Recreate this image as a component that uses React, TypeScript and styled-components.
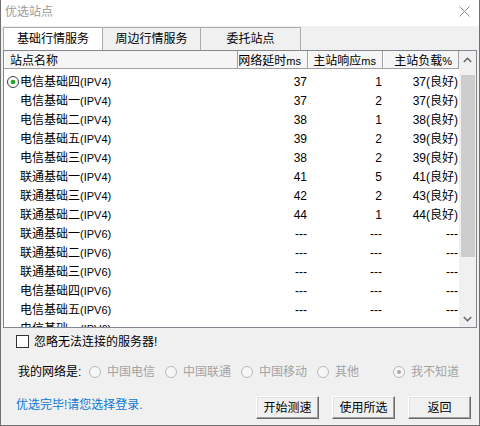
import styled, { createGlobalStyle } from 'styled-components';

type Row = {
  name: string;
  proto: string;
  delay: string;
  resp: string;
  load: string;
  picked?: boolean;
};

const rows: Row[] = [
  { name: '电信基础四', proto: '(IPV4)', delay: '37', resp: '1', load: '37(良好)', picked: true },
  { name: '电信基础一', proto: '(IPV4)', delay: '37', resp: '2', load: '37(良好)' },
  { name: '电信基础二', proto: '(IPV4)', delay: '38', resp: '1', load: '38(良好)' },
  { name: '电信基础五', proto: '(IPV4)', delay: '39', resp: '2', load: '39(良好)' },
  { name: '电信基础三', proto: '(IPV4)', delay: '38', resp: '2', load: '39(良好)' },
  { name: '联通基础一', proto: '(IPV4)', delay: '41', resp: '5', load: '41(良好)' },
  { name: '联通基础三', proto: '(IPV4)', delay: '42', resp: '2', load: '43(良好)' },
  { name: '联通基础二', proto: '(IPV4)', delay: '44', resp: '1', load: '44(良好)' },
  { name: '联通基础一', proto: '(IPV6)', delay: '---', resp: '---', load: '---' },
  { name: '联通基础二', proto: '(IPV6)', delay: '---', resp: '---', load: '---' },
  { name: '联通基础三', proto: '(IPV6)', delay: '---', resp: '---', load: '---' },
  { name: '电信基础四', proto: '(IPV6)', delay: '---', resp: '---', load: '---' },
  { name: '电信基础五', proto: '(IPV6)', delay: '---', resp: '---', load: '---' },
  { name: '电信基础一', proto: '(IPV6)', delay: '---', resp: '---', load: '---' },
];

const tabs = [
  { label: '基础行情服务', width: 100 },
  { label: '周边行情服务', width: 99 },
  { label: '委托站点', width: 101 },
];

const networks = ['中国电信', '中国联通', '中国移动', '其他', '我不知道'];

const App = () => {
  return (
    <>
      <GlobalStyle />
      <Window>
        <TitleBar>
          <Title>优选站点</Title>
          <svg width="11" height="11" viewBox="0 0 11 11">
            <path d="M0.5 0.5 L10.5 10.5 M10.5 0.5 L0.5 10.5" stroke="#8c8c8c" strokeWidth="1" />
          </svg>
        </TitleBar>

        <TabStrip>
          {tabs.map((t, i) => (
            <Tab key={t.label} $width={t.width} $active={i === 0} $first={i === 0}>
              {t.label}
            </Tab>
          ))}
        </TabStrip>

        <ListBox>
          <Table>
            <HeaderRow>
              <HeadCell>站点名称</HeadCell>
              <HeadCell $right>网络延时<Latin>ms</Latin></HeadCell>
              <HeadCell $right>主站响应<Latin>ms</Latin></HeadCell>
              <HeadCell $right>主站负载<Latin>%</Latin></HeadCell>
            </HeaderRow>
            <Body>
              {rows.map((r, i) => (
                <DataRow key={i}>
                  <NameCell>
                    <RadioSlot>
                      {r.picked && (
                        <svg width="12" height="12" viewBox="0 0 12 12">
                          <circle cx="6" cy="6" r="5.5" fill="#fff" stroke="#3c3c3c" />
                          <circle cx="6" cy="6" r="2.3" fill="#22a822" />
                        </svg>
                      )}
                    </RadioSlot>
                    {r.name}
                    <Latin>{r.proto}</Latin>
                  </NameCell>
                  <NumCell>{r.delay}</NumCell>
                  <NumCell>{r.resp}</NumCell>
                  <NumCell>{r.load}</NumCell>
                </DataRow>
              ))}
            </Body>
          </Table>
          <ScrollBar>
            <ArrowButton>
              <svg width="9" height="6" viewBox="0 0 9 6">
                <polyline points="0.8,5 4.5,1.3 8.2,5" fill="none" stroke="#606060" strokeWidth="1.4" />
              </svg>
            </ArrowButton>
            <Track>
              <Thumb />
            </Track>
            <ArrowButton>
              <svg width="9" height="6" viewBox="0 0 9 6">
                <polyline points="0.8,1 4.5,4.7 8.2,1" fill="none" stroke="#606060" strokeWidth="1.4" />
              </svg>
            </ArrowButton>
          </ScrollBar>
        </ListBox>

        <CheckRow>
          <CheckBox />
          <span>忽略无法连接的服务器!</span>
        </CheckRow>

        <NetRow>
          <NetLabel>我的网络是:</NetLabel>
          {networks.map((n, i) => (
            <RadioItem key={n}>
              <svg width="12" height="12" viewBox="0 0 12 12">
                <circle cx="6" cy="6" r="5.5" fill="#f7f7f7" stroke="#b9b9b9" />
                {i === networks.length - 1 && <circle cx="6" cy="6" r="2" fill="#a8a8a8" />}
              </svg>
              <span>{n}</span>
            </RadioItem>
          ))}
        </NetRow>

        <BottomRow>
          <Status>优选完毕!请您选择登录.</Status>
          <Buttons>
            <Button>开始测速</Button>
            <Button>使用所选</Button>
            <Button>返回</Button>
          </Buttons>
        </BottomRow>
      </Window>
    </>
  );
};

export default App;

const GlobalStyle = createGlobalStyle`
  html, body {
    margin: 0;
    padding: 0;
    background: #fff;
  }
  body {
    font-family: "Liberation Sans", "Noto Sans CJK SC", sans-serif;
    font-size: 12px;
    color: #000;
  }
  * {
    box-sizing: border-box;
  }
`;

const Window = styled.div`
  width: 480px;
  height: 426px;
  display: flex;
  flex-direction: column;
  background: #f0f0f0;
  border: 1px solid #707070;
  border-top: none;
  overflow: hidden;
  line-height: 14px;
`;

const TitleBar = styled.div`
  height: 26px;
  flex-shrink: 0;
  display: flex;
  align-items: center;
  justify-content: space-between;
  background: #fff;
  padding: 0 9px 3px 4px;
`;

const Title = styled.span`
  color: #999;
`;

const TabStrip = styled.div`
  height: 24px;
  flex-shrink: 0;
  display: flex;
  align-items: flex-end;
  padding-left: 2px;
`;

const Tab = styled.div<{ $width: number; $active?: boolean; $first?: boolean }>`
  width: ${(p) => p.$width}px;
  height: 23px;
  margin-left: ${(p) => (p.$first ? 0 : -1)}px;
  border: 1px solid #acacac;
  border-bottom: none;
  background: ${(p) => (p.$active ? '#fff' : '#f0f0f0')};
  display: flex;
  align-items: center;
  justify-content: center;
  padding-bottom: 1px;
`;

const ListBox = styled.div`
  height: 278px;
  flex-shrink: 0;
  margin: 0 2px;
  border: 1px solid #828790;
  background: #fff;
  display: flex;
`;

const Table = styled.div`
  flex: 1;
  display: flex;
  flex-direction: column;
  overflow: hidden;
`;

const columns = '234px 70px 75px 76px';

const HeaderRow = styled.div`
  height: 18px;
  flex-shrink: 0;
  display: grid;
  grid-template-columns: ${columns};
  background: #f5f5f5;
  border-bottom: 1px solid #a0a0a0;
`;

const HeadCell = styled.div<{ $right?: boolean }>`
  display: flex;
  align-items: flex-end;
  justify-content: ${(p) => (p.$right ? 'flex-end' : 'flex-start')};
  padding: 0 ${(p) => (p.$right ? 6 : 4)}px 0 5px;
  border-right: 1px solid #a0a0a0;
  border-left: 1px solid #fff;
  white-space: nowrap;
  overflow: visible;
`;

const Latin = styled.span`
  font-size: 11px;
`;

const Body = styled.div`
  flex: 1;
  overflow: hidden;
  padding-top: 3px;
`;

const DataRow = styled.div`
  height: 19px;
  display: grid;
  grid-template-columns: ${columns};
  align-items: center;
`;

const NameCell = styled.div`
  display: flex;
  align-items: center;
  padding-left: 3px;
  white-space: nowrap;
`;

const RadioSlot = styled.span`
  width: 13px;
  height: 12px;
  display: inline-flex;
  align-items: center;
`;

const NumCell = styled.div`
  text-align: right;
  padding-right: 1px;
  white-space: nowrap;
`;

const ScrollBar = styled.div`
  width: 17px;
  flex-shrink: 0;
  display: flex;
  flex-direction: column;
  background: #f0f0f0;
`;

const ArrowButton = styled.div`
  height: 17px;
  flex-shrink: 0;
  display: flex;
  align-items: center;
  justify-content: center;
`;

const Track = styled.div`
  flex: 1;
  padding: 7px 1px 0 2px;
`;

const Thumb = styled.div`
  height: 182px;
  background: #cdcdcd;
`;

const CheckRow = styled.div`
  height: 26px;
  flex-shrink: 0;
  display: flex;
  align-items: center;
  padding-left: 15px;
  padding-top: 1px;
  gap: 5px;
`;

const CheckBox = styled.span`
  width: 13px;
  height: 13px;
  border: 1px solid #333;
  background: #fff;
`;

const NetRow = styled.div`
  height: 36px;
  flex-shrink: 0;
  display: flex;
  align-items: center;
  padding-left: 17px;
`;

const NetLabel = styled.span`
  width: 71px;
  white-space: nowrap;
`;

const RadioItem = styled.span`
  width: 76px;
  display: flex;
  align-items: center;
  gap: 6px;
  color: #a3a3a3;
  white-space: nowrap;
`;

const BottomRow = styled.div`
  flex: 1;
  display: flex;
  align-items: flex-start;
  padding: 0 8px 0 15px;
`;

const Status = styled.span`
  flex: 1;
  margin-top: 8px;
  color: #0a78d6;
`;

const Buttons = styled.div`
  display: flex;
  gap: 13px;
  margin-top: 6px;
`;

const Button = styled.button`
  width: 63px;
  height: 23px;
  padding: 0;
  font: inherit;
  color: #000;
  background: #f0f0f0;
  border: 1px solid;
  border-color: #fff #696969 #696969 #fff;
  box-shadow: inset -1px -1px 0 #a0a0a0, inset 1px 1px 0 #e3e3e3;
  cursor: pointer;
`;
